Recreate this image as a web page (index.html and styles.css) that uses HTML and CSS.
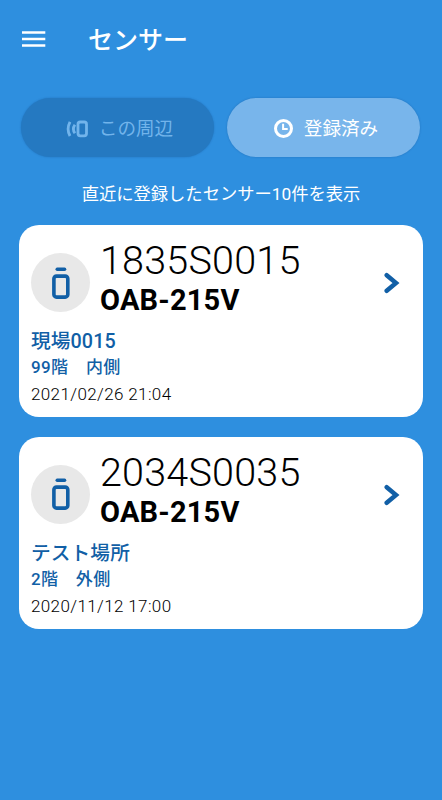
FILE: index.html
```html
<!DOCTYPE html>
<html lang="ja">
<head>
<meta charset="utf-8">
<title>センサー</title>
<link rel="stylesheet" href="styles.css">
</head>
<body>
<header class="bar">
  <svg class="menu" width="24" height="18" viewBox="0 0 24 18"><path d="M0 2.500h23.300M0 9h23.300M0 15.500h23.300" stroke="#fff" stroke-width="2.700"/></svg>
  <h1 class="title">センサー</h1>
</header>
<nav class="tabs">
  <button class="tab tab-nearby">
    <svg width="22" height="18" viewBox="0 0 22 18" fill="none" stroke="currentColor"><rect x="12" y="2" width="8.500" height="13.800" rx="2.200" stroke-width="2.800"/><path d="M4 1.800Q.2 9 4 16M8.900 4.800Q5.900 9 8.900 13.200" stroke-width="2.800"/></svg>
    <span>この周辺</span>
  </button>
  <button class="tab tab-saved">
    <svg width="20" height="20" viewBox="0 0 20 20" fill="none" stroke="currentColor"><circle cx="10.500" cy="9.500" r="8" stroke-width="3"/><path d="M10.100 4.700V10h4.600" stroke-width="2"/></svg>
    <span>登録済み</span>
  </button>
</nav>
<p class="note">直近に登録したセンサー10件を表示</p>
<main class="list">
  <article class="card">
    <div class="head">
      <span class="badge"><svg width="20" height="32" viewBox="0 0 20 32" fill="none" stroke="#115fa6" stroke-width="3.600"><path d="M6.200 2.300h7.400" stroke-linecap="round" stroke-width="3.400"/><rect x="2.900" y="9.100" width="13.900" height="21" rx="2.600"/></svg></span>
      <div class="names"><div class="serial">1835S0015</div><div class="model">OAB-215V</div></div>
      <svg class="chevron" width="16" height="22" viewBox="0 0 16 22"><path d="M2.700 3.200 12 11l-9.300 7.800" fill="none" stroke="#115fa6" stroke-width="4.500" stroke-linecap="round"/></svg>
    </div>
    <div class="place">現場0015</div>
    <div class="floor">99階　内側</div>
    <time class="date">2021/02/26 21:04</time>
  </article>
  <article class="card">
    <div class="head">
      <span class="badge"><svg width="20" height="32" viewBox="0 0 20 32" fill="none" stroke="#115fa6" stroke-width="3.600"><path d="M6.200 2.300h7.400" stroke-linecap="round" stroke-width="3.400"/><rect x="2.900" y="9.100" width="13.900" height="21" rx="2.600"/></svg></span>
      <div class="names"><div class="serial">2034S0035</div><div class="model">OAB-215V</div></div>
      <svg class="chevron" width="16" height="22" viewBox="0 0 16 22"><path d="M2.700 3.200 12 11l-9.300 7.800" fill="none" stroke="#115fa6" stroke-width="4.500" stroke-linecap="round"/></svg>
    </div>
    <div class="place">テスト場所</div>
    <div class="floor">2階　外側</div>
    <time class="date">2020/11/12 17:00</time>
  </article>
</main>
</body>
</html>
```
FILE: styles.css
```css
* { box-sizing: border-box; }
body {
  margin: 0;
  height: 800px;
  background: #2e8fdf;
  color: #fff;
  font-family: Roboto, "Noto Sans CJK JP", sans-serif;
}
.bar {
  display: flex;
  align-items: center;
  height: 78px;
  padding-left: 22px;
}
.menu { display: block; }
.title {
  margin: 4px 0 0 42px;
  font-size: 25px;
  font-weight: 500;
  line-height: 36px;
}
.tabs {
  display: flex;
  gap: 13px;
  padding: 20px 22px 0 21px;
}
.tab {
  display: flex;
  flex: 1;
  align-items: center;
  justify-content: center;
  gap: 11px;
  height: 59px;
  padding: 2px 0 0 4px;
  border: 0;
  border-radius: 30px;
  font: 400 18.600px/28px Roboto, "Noto Sans CJK JP", sans-serif;
  box-shadow: 0 0 2px rgba(0, 50, 110, .3);
}
.tab svg { display: block; }
.tab-nearby { background: #2579c1; color: #72b4eb; }
.tab-saved { background: #78b5eb; color: #fff; }
.note {
  margin: 24px 0 0;
  text-align: center;
  font-size: 17.300px;
  line-height: 26px;
}
.list {
  display: flex;
  flex-direction: column;
  gap: 19.500px;
  padding: 18px 19.500px 0 19px;
}
.card {
  height: 192px;
  padding: 12px;
  border-radius: 20px;
  background: #fff;
  color: #000;
}
.head {
  display: flex;
  align-items: center;
  height: 92px;
}
.badge {
  display: flex;
  align-items: center;
  justify-content: center;
  width: 59px;
  height: 59px;
  margin-bottom: 1px;
  border-radius: 50%;
  background: #e8e8e8;
}
.names {
  flex: 1;
  align-self: flex-start;
  padding-left: 10px;
}
.serial {
  height: 46px;
  font-size: 39.500px;
  font-weight: 300;
  line-height: 48px;
  letter-spacing: .2px;
}
.model {
  font-size: 29px;
  font-weight: 700;
  line-height: 34px;
  letter-spacing: .2px;
}
.chevron { display: block; margin-right: 11px; }
.place, .floor { color: #115fa6; font-weight: 500; }
.place { font-size: 19.700px; line-height: 26px; letter-spacing: .1px; }
.floor { font-size: 17px; line-height: 24px; letter-spacing: .4px; }
.date {
  display: block;
  margin-top: 3px;
  color: #000;
  font-size: 17px;
  font-weight: 300;
  line-height: 24px;
  letter-spacing: .38px;
}
```
